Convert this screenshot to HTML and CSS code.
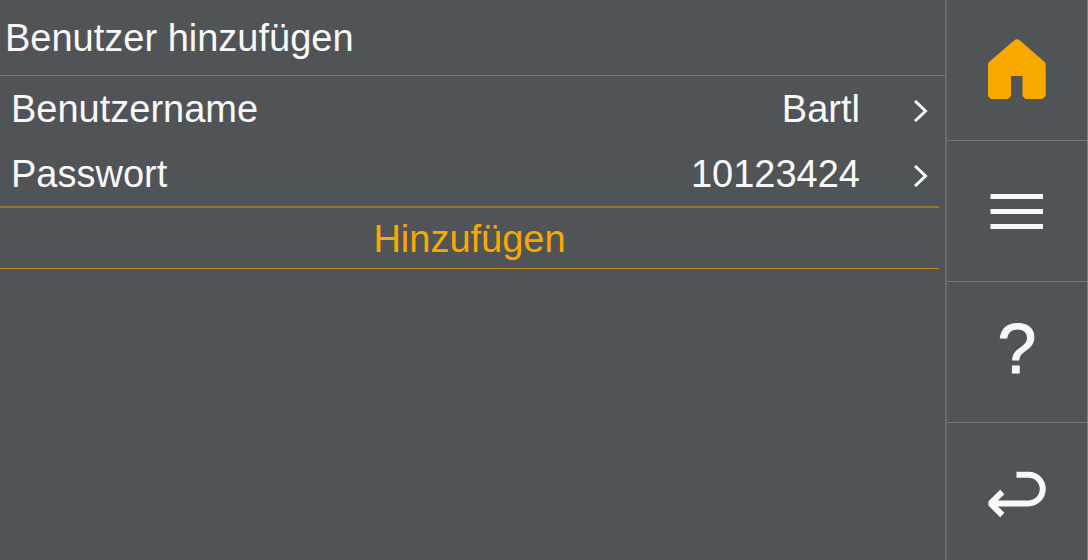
FILE: index.html
```html
<!DOCTYPE html>
<html lang="de">

<head>
    <meta charset="UTF-8">
    <meta name="viewport" content="width=device-width, initial-scale=1.0">
    <title>Benutzer hinzufügen</title>
    <link rel="stylesheet" href="styles.css">
</head>

<body>
    <main class="content">
        <h1 class="title">Benutzer hinzufügen</h1>
        <form class="user-form">
            <button type="button" class="row">
                <span class="label">Benutzername</span>
                <span class="value">Bartl</span>
                <svg class="chevron" viewBox="0 0 14 22" aria-hidden="true">
                    <path d="M1 1 L11.5 11 L1 21" />
                </svg>
            </button>
            <button type="button" class="row">
                <span class="label">Passwort</span>
                <span class="value">10123424</span>
                <svg class="chevron" viewBox="0 0 14 22" aria-hidden="true">
                    <path d="M1 1 L11.5 11 L1 21" />
                </svg>
            </button>
            <button type="submit" class="submit">Hinzufügen</button>
        </form>
    </main>

    <nav class="sidebar">
        <a class="nav-item" href="#home" aria-label="Startseite">
            <svg class="icon home" viewBox="0 0 60 60">
                <path d="M27 0.4 Q30 -1.8 33 0.4 L57.6 22 Q58.7 23 58.7 25 V56 L55.5 59 H38.5 L35.5 56 V36 H24 V56 L21 59 H4 L1 56 V25 Q1 23 2 22 Z" />
            </svg>
        </a>
        <a class="nav-item" href="#menu" aria-label="Menü">
            <svg class="icon" viewBox="0 0 60 60">
                <path class="line thin" d="M3.5 15.5 H56 M3.5 30.5 H56 M3.5 45.5 H56" />
            </svg>
        </a>
        <a class="nav-item help" href="#help" aria-label="Hilfe">?</a>
        <a class="nav-item" href="#back" aria-label="Zurück">
            <svg class="icon" viewBox="0 0 60 60">
                <path class="line" d="M29.5 11.7 H41.5 A14.2 14.3 0 0 1 41.5 40.4 H5 M15.3 29 L3.5 40.4 L15.3 52" />
            </svg>
        </a>
    </nav>
</body>

</html>
```

FILE: styles.css
```css
* {
    box-sizing: border-box;
}

body {
    display: grid;
    grid-template-columns: 1fr 143px;
    height: 100vh;
    margin: 0;
    overflow: hidden;
    background-color: #505457;
    color: #f8f8f8;
    font-family: "Liberation Sans", Arial, sans-serif;
    font-size: 38px;
}

button {
    border: none;
    background: none;
    color: inherit;
    font: inherit;
    cursor: pointer;
}

.title {
    height: 76px;
    margin: 0;
    padding: 1px 0 0 5px;
    border-bottom: 1px solid #74787b;
    font-size: 38px;
    font-weight: normal;
    line-height: 75px;
}

.user-form {
    display: flex;
    flex-direction: column;
    padding-right: 6px;
}

.row {
    display: flex;
    align-items: center;
    height: 65px;
    padding: 2px 11px 0;
    text-align: left;
}

.label {
    flex: 1;
}

.value {
    margin-right: 54px;
}

.chevron {
    width: 14px;
    height: 22px;
    margin-top: 2px;
    fill: none;
    stroke: #f8f8f8;
    stroke-width: 3;
}

.submit {
    height: 63px;
    padding: 2px 0 0;
    border-top: 2px solid #94722f;
    border-bottom: 1px solid #c48a14;
    color: #f9a800;
}

.sidebar {
    display: grid;
    grid-auto-rows: 141px;
    border-left: 2px solid #676b6d;
    border-right: 1px solid #7c8082;
}

.nav-item {
    display: flex;
    align-items: center;
    justify-content: center;
    border-bottom: 1px solid #74787b;
    color: #f8f8f8;
    text-decoration: none;
}

.icon {
    width: 60px;
    height: 60px;
    overflow: visible;
}

.home {
    fill: #f9a800;
}

.line {
    fill: none;
    stroke: #f8f8f8;
    stroke-width: 6;
    stroke-linejoin: bevel;
}

.thin {
    stroke-width: 5;
}

.help {
    padding-bottom: 6px;
    font-size: 70px;
    -webkit-text-stroke: 1px #f8f8f8;
}
```
